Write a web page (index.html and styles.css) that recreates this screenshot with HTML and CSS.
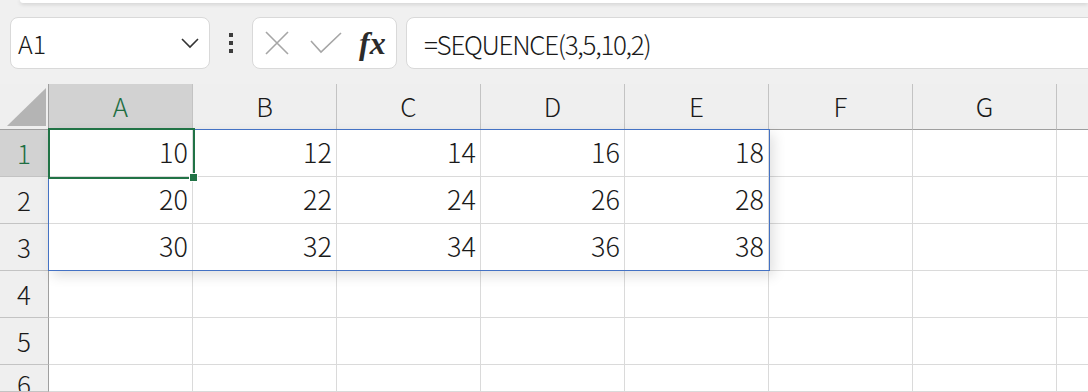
FILE: index.html
```html
<!DOCTYPE html>
<html lang="ja">
<head>
    <meta charset="UTF-8">
    <title>SEQUENCE</title>
    <link rel="stylesheet" href="styles.css">
</head>
<body>
<div class="ribbon-edge"></div>
<div class="formula-row">
    <div class="name-box">
        <span>A1</span>
        <svg class="chevron" width="20" height="12" viewBox="0 0 20 12"><path d="M2 2 L10 10 L18 2" fill="none" stroke="#333" stroke-width="1.6"/></svg>
    </div>
    <div class="grip"><i></i><i></i><i></i></div>
    <div class="fx-box">
        <svg width="24" height="24" viewBox="0 0 24 24"><path d="M1 1 L23 23 M23 1 L1 23" stroke="#a6a6a6" stroke-width="1.6"/></svg>
        <svg width="32" height="22" viewBox="0 0 32 22"><path d="M1 9 L11 20 L31 1" fill="none" stroke="#a6a6a6" stroke-width="1.6"/></svg>
        <span class="fx">fx</span>
    </div>
    <div class="formula-box">=SEQUENCE(3,5,10,2)</div>
</div>

<div class="sheet">
    <div class="grid">
        <div class="corner"><span class="tri"></span></div>
        <div class="col-head active">A</div>
        <div class="col-head">B</div>
        <div class="col-head">C</div>
        <div class="col-head">D</div>
        <div class="col-head">E</div>
        <div class="col-head">F</div>
        <div class="col-head">G</div>
        <div class="col-head"></div>

        <div class="row-head active">1</div>
        <div class="cell">10</div><div class="cell">12</div><div class="cell">14</div><div class="cell">16</div><div class="cell">18</div>
        <div class="cell"></div><div class="cell"></div><div class="cell"></div>

        <div class="row-head">2</div>
        <div class="cell">20</div><div class="cell">22</div><div class="cell">24</div><div class="cell">26</div><div class="cell">28</div>
        <div class="cell"></div><div class="cell"></div><div class="cell"></div>

        <div class="row-head">3</div>
        <div class="cell">30</div><div class="cell">32</div><div class="cell">34</div><div class="cell">36</div><div class="cell">38</div>
        <div class="cell"></div><div class="cell"></div><div class="cell"></div>

        <div class="row-head">4</div>
        <div class="cell"></div><div class="cell"></div><div class="cell"></div><div class="cell"></div><div class="cell"></div>
        <div class="cell"></div><div class="cell"></div><div class="cell"></div>

        <div class="row-head">5</div>
        <div class="cell"></div><div class="cell"></div><div class="cell"></div><div class="cell"></div><div class="cell"></div>
        <div class="cell"></div><div class="cell"></div><div class="cell"></div>

        <div class="row-head last">6</div>
        <div class="cell"></div><div class="cell"></div><div class="cell"></div><div class="cell"></div><div class="cell"></div>
        <div class="cell"></div><div class="cell"></div><div class="cell"></div>
    </div>
    <!-- spill range A1:E3 and active cell -->
    <div class="spill"></div>
    <div class="selection"><span class="handle"></span></div>
</div>
</body>
</html>
```

FILE: styles.css
```css
body {
    margin: 0;
    background-color: #f0f0f0;
    font-family: "Noto Sans CJK JP", "Noto Sans", sans-serif;
    font-weight: 300;
    color: #1a1a1a;
    overflow: hidden;
}

.ribbon-edge {
    height: 3px;
    margin-left: 20px;
    background-color: #fff;
    border-bottom-left-radius: 6px;
    box-shadow: 0 1px 4px rgba(0, 0, 0, 0.18);
}

.formula-row {
    display: flex;
    align-items: center;
    height: 52px;
    margin-top: 14px;
    margin-bottom: 15px;
}

.name-box {
    display: flex;
    align-items: center;
    justify-content: space-between;
    box-sizing: border-box;
    width: 200px;
    height: 52px;
    margin-left: 10px;
    padding: 0 9px 0 7px;
    background-color: #fff;
    border: 1px solid #d9d9d9;
    border-radius: 8px;
    font-size: 25px;
}

.grip {
    display: flex;
    flex-direction: column;
    gap: 4px;
    margin-left: 19px;
    width: 4px;
}

.grip i {
    display: block;
    width: 4px;
    height: 4px;
    background-color: #3d3d3d;
}

.fx-box {
    display: flex;
    align-items: center;
    box-sizing: border-box;
    width: 145px;
    height: 52px;
    margin-left: 19px;
    padding: 0 0 0 12px;
    background-color: #fff;
    border: 1px solid #d9d9d9;
    border-radius: 8px;
}

.fx-box svg + svg {
    margin-left: 21px;
}

.fx {
    margin-left: 17px;
    font-family: "Liberation Serif", "DejaVu Serif", serif;
    font-style: italic;
    font-weight: bold;
    font-size: 32px;
    color: #2b2b2b;
}

.formula-box {
    display: flex;
    align-items: center;
    box-sizing: border-box;
    flex: 1;
    height: 52px;
    margin-left: 9px;
    margin-right: -10px;
    padding-left: 17px;
    background-color: #fff;
    border: 1px solid #d9d9d9;
    border-radius: 8px;
    font-size: 26px;
    letter-spacing: -1.3px;
}

.sheet {
    position: relative;
    background-color: #fff;
}

.grid {
    display: grid;
    grid-template-columns: 49px repeat(8, 144px);
    grid-template-rows: 46px repeat(5, 47px) 27px;
}

.grid > div {
    box-sizing: border-box;
    border-right: 1px solid #dadada;
    border-bottom: 1px solid #dadada;
}

.corner {
    position: relative;
    background-color: #efefef;
    border-right-color: #9f9f9f !important;
    border-bottom-color: #9f9f9f !important;
}

.tri {
    position: absolute;
    left: 7px;
    top: 4px;
    width: 39px;
    height: 38px;
    background-color: #b4b4b4;
    clip-path: polygon(100% 0, 100% 100%, 0 100%);
}

.col-head {
    display: flex;
    align-items: center;
    justify-content: center;
    background-color: #efefef;
    border-right-color: #c3c3c3 !important;
    border-bottom-color: #9f9f9f !important;
    font-size: 26px;
    padding-bottom: 2px;
}

.row-head {
    display: flex;
    align-items: center;
    justify-content: center;
    background-color: #efefef;
    border-right-color: #9f9f9f !important;
    border-bottom-color: #c3c3c3 !important;
    font-size: 26px;
    padding-bottom: 2px;
}

.row-head.last {
    align-items: flex-start;
    padding-top: 2px;
    line-height: 34px;
    height: 27px;
    overflow: hidden;
}

.col-head.active,
.row-head.active {
    background-color: #d2d2d2;
    color: #1e6e42;
}

.cell {
    display: flex;
    align-items: center;
    justify-content: flex-end;
    padding: 0 4px 3px 0;
    font-size: 27px;
}

.spill {
    position: absolute;
    left: 48px;
    top: 45px;
    width: 722px;
    height: 142px;
    box-sizing: border-box;
    border: 1px solid #4472c4;
    box-shadow: 4px 5px 12px rgba(0, 0, 0, 0.12);
    pointer-events: none;
}

.selection {
    position: absolute;
    left: 48px;
    top: 44px;
    width: 147px;
    height: 51px;
    box-sizing: border-box;
    border: 2px solid #217346;
}

.handle {
    position: absolute;
    right: -5px;
    bottom: -5px;
    width: 7px;
    height: 7px;
    background-color: #217346;
    border: 1px solid #fff;
}
```
